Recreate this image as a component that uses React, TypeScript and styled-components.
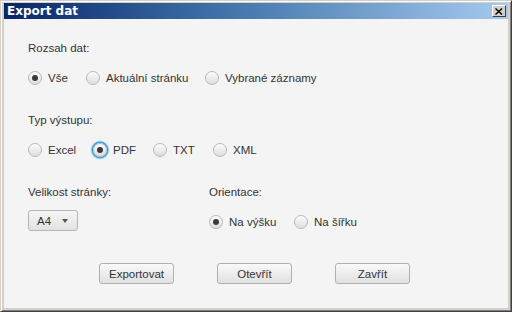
import React from 'react'
import styled, { createGlobalStyle } from 'styled-components'

const GlobalStyle = createGlobalStyle`
  html, body {
    margin: 0;
    padding: 0;
    background: #d4d0c8;
  }
  * {
    box-sizing: border-box;
  }
`

const WindowFrame = styled.div`
  width: 512px;
  height: 312px;
  display: flex;
  flex-direction: column;
  background: #d4d0c8;
  border-top: 1px solid #d4d0c8;
  border-left: 1px solid #d4d0c8;
  border-right: 1px solid #404040;
  border-bottom: 1px solid #404040;
  box-shadow: inset 1px 1px 0 #ffffff, inset -1px -1px 0 #808080;
  padding: 2px 3px 3px 3px;
  font-family: 'Liberation Sans', Arial, sans-serif;
`

const TitleBar = styled.div`
  height: 16px;
  display: flex;
  align-items: center;
  justify-content: space-between;
  padding: 0 2px 0 3px;
  background: linear-gradient(to right, #0a246a 0%, #3a6ea5 40%, #a6caf0 100%);
`

const Title = styled.span`
  color: #ffffff;
  font-family: 'DejaVu Sans', sans-serif;
  font-weight: bold;
  font-size: 12px;
  line-height: 16px;
`

const CloseButton = styled.div`
  width: 14px;
  height: 12px;
  display: flex;
  align-items: center;
  justify-content: center;
  background: #d4d0c8;
  border-top: 1px solid #ffffff;
  border-left: 1px solid #ffffff;
  border-right: 1px solid #404040;
  border-bottom: 1px solid #404040;
`

const Content = styled.div`
  flex: 1;
  background: #f4f4f4;
  padding: 21px 0 0 24px;
  display: flex;
  flex-direction: column;
`

const Label = styled.div<{ $gap?: number }>`
  font-size: 11.5px;
  line-height: 16px;
  color: #333333;
  margin-top: ${(p) => p.$gap ?? 0}px;
  white-space: nowrap;
`

const RadioRow = styled.div<{ $gap: number }>`
  display: flex;
  align-items: center;
  height: 14px;
  margin-top: ${(p) => p.$gap}px;
`

const RadioItem = styled.label<{ $width: number }>`
  display: flex;
  align-items: center;
  gap: 6px;
  width: ${(p) => p.$width}px;
  font-size: 11.5px;
  color: #333333;
  white-space: nowrap;
`

const RadioCircle = styled.span<{ $checked?: boolean; $focused?: boolean }>`
  width: 14px;
  height: 14px;
  flex: none;
  border-radius: 50%;
  border: 1px solid #b8b8b8;
  background: linear-gradient(#fcfcfc, #dedede);
  display: flex;
  align-items: center;
  justify-content: center;
  box-shadow: ${(p) => (p.$focused ? '0 0 0 1.5px #3aa2d6, 0 0 0 2.5px #bfe3f3' : 'none')};
  &::after {
    content: '';
    display: ${(p) => (p.$checked ? 'block' : 'none')};
    width: 6px;
    height: 6px;
    border-radius: 50%;
    background: #3a3a3a;
  }
`

const Columns = styled.div`
  display: grid;
  grid-template-columns: 181px 1fr;
  margin-top: 27px;
`

const Column = styled.div`
  display: flex;
  flex-direction: column;
`

const Combo = styled.div`
  width: 50px;
  height: 21px;
  margin-top: 10px;
  display: flex;
  align-items: center;
  justify-content: space-between;
  padding: 0 9px 0 8px;
  border: 1px solid #b4b4b4;
  border-radius: 3px;
  background: linear-gradient(#f6f6f6, #e2e2e2);
  font-size: 11.5px;
  color: #333333;
`

const Arrow = styled.span`
  width: 0;
  height: 0;
  border-left: 3.5px solid transparent;
  border-right: 3.5px solid transparent;
  border-top: 4px solid #555555;
`

const ButtonRow = styled.div`
  display: flex;
  gap: 43px;
  margin-top: 32px;
  padding-left: 71px;
`

const Button = styled.div`
  width: 75px;
  height: 21px;
  display: flex;
  align-items: center;
  justify-content: center;
  border: 1px solid #b0b0b0;
  border-radius: 3px;
  background: linear-gradient(#f9f9f9, #e1e1e1);
  font-size: 11.5px;
  color: #333333;
`

type Option = { label: string; width: number; checked?: boolean; focused?: boolean }

const RadioGroup = ({ options, gap }: { options: Option[]; gap: number }) => (
  <RadioRow $gap={gap}>
    {options.map((o) => (
      <RadioItem key={o.label} $width={o.width}>
        <RadioCircle $checked={o.checked} $focused={o.focused} />
        {o.label}
      </RadioItem>
    ))}
  </RadioRow>
)

export default function App() {
  return (
    <>
      <GlobalStyle />
      <WindowFrame>
        <TitleBar>
          <Title>Export dat</Title>
          <CloseButton>
            <svg width="8" height="7" viewBox="0 0 8 7">
              <path d="M0.5 0.5 L7 6.5 M7 0.5 L0.5 6.5" stroke="#000" strokeWidth="1.4" />
            </svg>
          </CloseButton>
        </TitleBar>
        <Content>
          <Label>Rozsah dat:</Label>
          <RadioGroup
            gap={15}
            options={[
              { label: 'Vše', width: 58, checked: true },
              { label: 'Aktuální stránku', width: 119 },
              { label: 'Vybrané záznamy', width: 120 },
            ]}
          />
          <Label $gap={27}>Typ výstupu:</Label>
          <RadioGroup
            gap={15}
            options={[
              { label: 'Excel', width: 65 },
              { label: 'PDF', width: 60, checked: true, focused: true },
              { label: 'TXT', width: 60 },
              { label: 'XML', width: 60 },
            ]}
          />
          <Columns>
            <Column>
              <Label>Velikost stránky:</Label>
              <Combo>
                A4
                <Arrow />
              </Combo>
            </Column>
            <Column>
              <Label>Orientace:</Label>
              <RadioGroup
                gap={15}
                options={[
                  { label: 'Na výšku', width: 85, checked: true },
                  { label: 'Na šířku', width: 80 },
                ]}
              />
            </Column>
          </Columns>
          <ButtonRow>
            <Button>Exportovat</Button>
            <Button>Otevřít</Button>
            <Button>Zavřít</Button>
          </ButtonRow>
        </Content>
      </WindowFrame>
    </>
  )
}
